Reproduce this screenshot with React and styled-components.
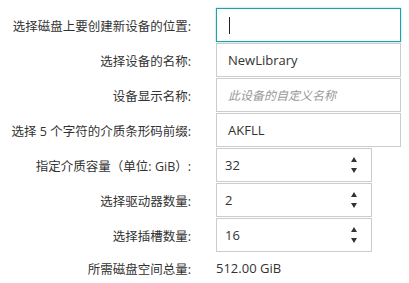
import React from 'react'
import styled, { createGlobalStyle } from 'styled-components'

const Global = createGlobalStyle`
    body {
        margin: 0;
        background: #fff;
        font-family: "Open Sans", "Noto Sans CJK SC", sans-serif;
        color: #333;
    }
`

const Form = styled.div`
    display: grid;
    grid-template-columns: 191px 185px;
    column-gap: 25px;
    row-gap: 1px;
    padding-top: 8px;
`

const Label = styled.div`
    height: ${p => p.$h || 34}px;
    display: flex;
    align-items: center;
    justify-content: flex-end;
    font-size: 12.5px;
    color: #333;
    white-space: nowrap;
`

const Field = styled.div`
    position: relative;
    width: ${p => p.$w || 185}px;
    height: 34px;
    box-sizing: border-box;
    border: 1px solid ${p => p.$focus ? '#1aa3aa' : '#ccc'};
    box-shadow: ${p => p.$focus ? '0 0 2px rgba(26,163,170,0.5)' : 'none'};
    display: flex;
    align-items: center;
    padding-left: ${p => p.$pad || 11}px;
    font-size: 13px;
    color: #333;
`

const Placeholder = styled.span`
    font-style: italic;
    color: #999;
    font-size: 12px;
`

const Caret = styled.span`
    width: 1px;
    height: 17px;
    background: #222;
    margin-left: 1px;
`

const Spinner = styled.div`
    position: absolute;
    right: 14px;
    top: 8px;
    display: flex;
    flex-direction: column;
    gap: 6px;
`

const Arrow = styled.span`
    width: 0;
    height: 0;
    border-left: 3.5px solid transparent;
    border-right: 3.5px solid transparent;
    ${p => p.$down ? 'border-top: 5px solid #333;' : 'border-bottom: 5px solid #333;'}
`

const Value = styled.div`
    height: ${p => p.$h || 34}px;
    display: flex;
    align-items: center;
    font-size: 13px;
    color: #333;
`

function NumberField({ value }) {
    return (
        <Field $w={156} $pad={8}>
            {value}
            <Spinner>
                <Arrow />
                <Arrow $down />
            </Spinner>
        </Field>
    )
}

export default function App() {
    return (
        <>
            <Global />
            <Form>
                <Label>选择磁盘上要创建新设备的位置:</Label>
                <Field $focus><Caret /></Field>

                <Label>选择设备的名称:</Label>
                <Field>NewLibrary</Field>

                <Label>设备显示名称:</Label>
                <Field><Placeholder>此设备的自定义名称</Placeholder></Field>

                <Label>选择 5 个字符的介质条形码前缀:</Label>
                <Field>AKFLL</Field>

                <Label>指定介质容量（单位: GiB）:</Label>
                <NumberField value="32" />

                <Label>选择驱动器数量:</Label>
                <NumberField value="2" />

                <Label>选择插槽数量:</Label>
                <NumberField value="16" />

                <Label $h={30}>所需磁盘空间总量:</Label>
                <Value $h={30}>512.00 GiB</Value>
            </Form>
        </>
    )
}
